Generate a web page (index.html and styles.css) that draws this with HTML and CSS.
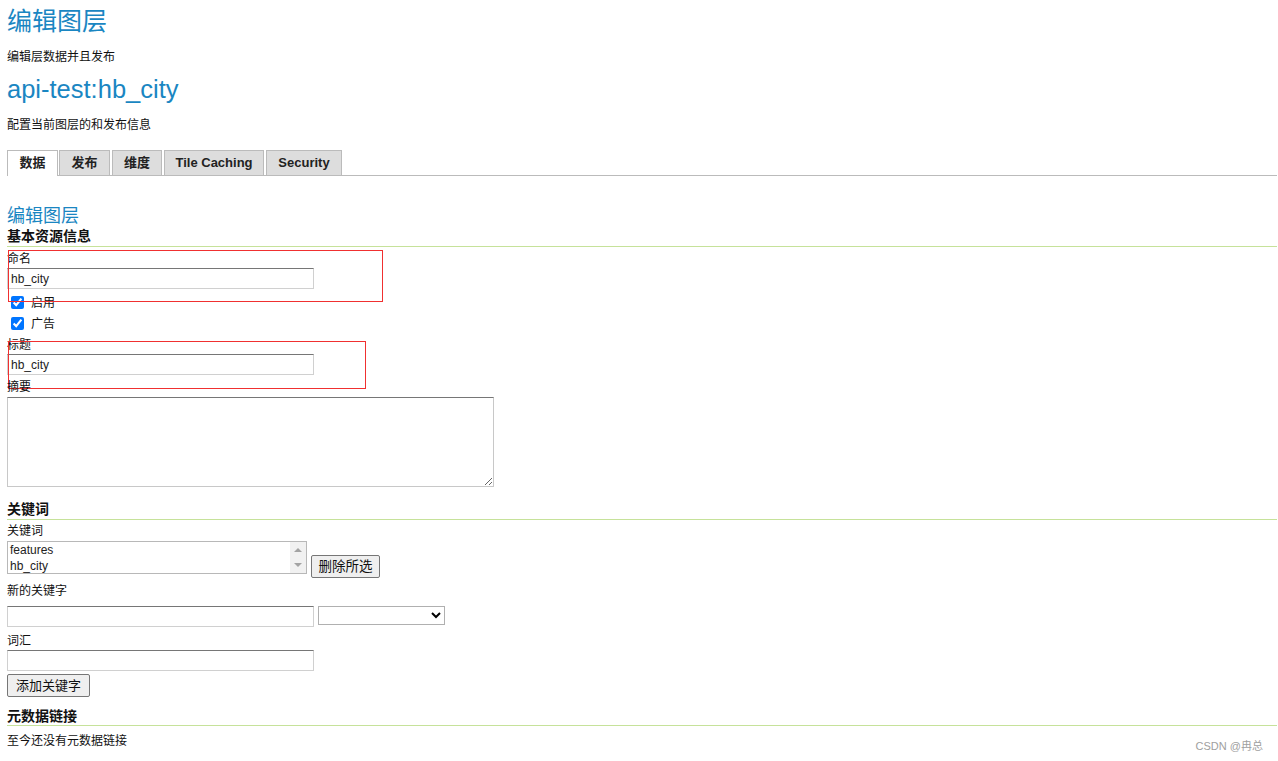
FILE: index.html
```html
<!DOCTYPE html>
<html lang="zh">
<head>
<meta charset="utf-8">
<title>编辑图层</title>
<link rel="stylesheet" href="styles.css">
</head>
<body>
<div class="page">
  <h1 class="title">编辑图层</h1>
  <p class="desc d1">编辑层数据并且发布</p>
  <h1 class="title t2">api-test:hb_city</h1>
  <p class="desc d2">配置当前图层的和发布信息</p>

  <ul class="tabs">
    <li class="tab active">数据</li>
    <li class="tab">发布</li>
    <li class="tab">维度</li>
    <li class="tab">Tile Caching</li>
    <li class="tab">Security</li>
  </ul>

  <h2 class="sub">编辑图层</h2>
  <h3 class="section s1">基本资源信息</h3>

  <div class="field f-name">
    <label class="lbl">命名</label>
    <input class="text" type="text" value="hb_city">
    <span class="mark m1"></span>
  </div>
  <div class="check c1"><input type="checkbox" checked><span>启用</span></div>
  <div class="check c2"><input type="checkbox" checked><span>广告</span></div>

  <div class="field f-title">
    <label class="lbl">标题</label>
    <input class="text" type="text" value="hb_city">
    <span class="mark m2"></span>
  </div>
  <div class="field f-abs">
    <label class="lbl">摘要</label>
    <textarea class="area"></textarea>
  </div>

  <h3 class="section s2">关键词</h3>
  <label class="lbl l-kw">关键词</label>
  <div class="kw-row">
    <div class="listbox">
      <div class="items"><div>features</div><div>hb_city</div></div>
      <div class="sbar"><span class="arr up"></span><span class="arr down"></span></div>
    </div>
    <button class="btn b-del">删除所选</button>
  </div>
  <label class="lbl l-new">新的关键字</label>
  <div class="new-row">
    <input class="text" type="text">
    <select class="sel"><option></option></select>
  </div>
  <label class="lbl l-voc">词汇</label>
  <input class="text voc" type="text">
  <button class="btn b-add">添加关键字</button>

  <h3 class="section s3">元数据链接</h3>
  <p class="desc d3">至今还没有元数据链接</p>
</div>
<div class="watermark">CSDN @冉总</div>
</body>
</html>
```
FILE: styles.css
```css
html, body { margin: 0; padding: 0; background: #fff; }
body {
  font-family: "Liberation Sans", "Noto Sans CJK SC", sans-serif;
  color: #222;
  font-size: 12px;
  width: 1278px;
  height: 761px;
  overflow: hidden;
  position: relative;
}
.page { padding: 0 1px 0 7px; display: flex; flex-direction: column; align-items: flex-start; }
.page > * { flex: none; }

.title {
  margin: 6px 0 0;
  font-size: 25px;
  line-height: 30px;
  font-weight: normal;
  color: #1a86c2;
}
.t2 { margin-top: 11px; font-size: 25.5px; }
.desc { margin: 13px 0 0; font-size: 12px; line-height: 16px; color: #111; }
.d1 { margin-bottom: -2px; }

.tabs {
  list-style: none;
  margin: 17px 0 0;
  padding: 0;
  display: flex;
  align-self: stretch;
  border-bottom: 1px solid #bbb;
  height: 25px;
}
.tab {
  box-sizing: border-box;
  height: 25px;
  border: 1px solid #bbb;
  border-bottom: none;
  background: #ddd;
  font-weight: bold;
  font-size: 13px;
  line-height: 24px;
  padding: 0;
  text-align: center;
  color: #222;
}
.tab:nth-child(1) { width: 51px; }
.tab:nth-child(2) { width: 51px; margin-left: 1px; }
.tab:nth-child(3) { width: 50px; margin-left: 2px; }
.tab:nth-child(4) { width: 100px; margin-left: 2px; }
.tab:nth-child(5) { width: 76px; margin-left: 2px; }
.tab.active { background: #fff; height: 26px; }

.sub {
  margin: 28px 0 0;
  font-size: 18px;
  line-height: 24px;
  font-weight: normal;
  color: #1a86c2;
}
.section {
  margin: 0;
  font-size: 14px;
  line-height: 16px;
  font-weight: bold;
  color: #111;
  align-self: stretch;
  padding-bottom: 2px;
  border-bottom: 1px solid #c6e29a;
}
.s2 { margin-top: 14px; padding-bottom: 2px; }
.s3 { margin-top: 11px; padding-bottom: 1px; }

.lbl { display: block; font-size: 12px; line-height: 16px; color: #111; }
.field { position: relative; display: flex; flex-direction: column; align-items: flex-start; }
.f-name { margin-top: 4px; }
.f-name .lbl, .f-title .lbl { margin-bottom: 1px; }
.f-title { margin-top: 3px; }
.f-abs { margin-top: 4px; }
.f-abs .lbl { margin-bottom: 2px; }

.text {
  box-sizing: border-box;
  width: 307px;
  height: 21px;
  margin: 0;
  padding: 1px 3px;
  font-family: "Liberation Sans", sans-serif;
  font-size: 12px;
  color: #222;
  border: 1px solid;
  border-color: #767676 #d0d0d0 #d0d0d0 #d0d0d0;
  border-radius: 0;
  outline: none;
}
.area {
  box-sizing: border-box;
  width: 487px;
  height: 90px;
  margin: 0;
  border: 1px solid;
  border-color: #767676 #c8c8c8 #c8c8c8 #c8c8c8;
  border-radius: 0;
  resize: both;
}

.mark { position: absolute; border: 1px solid #f03030; pointer-events: none; }
.m1 { left: 1px; top: -1px; width: 373px; height: 50px; }
.m2 { left: 1px; top: 4px; width: 356px; height: 46px; }

.check { display: flex; align-items: center; height: 21px; }
.c1 { margin-top: 3px; }
.check input {
  margin: 0 0 0 4px;
  width: 13px;
  height: 13px;
  accent-color: #0075ff;
}
.check span { margin-left: 7px; font-size: 12px; line-height: 16px; color: #111; }

.l-kw { margin-top: 3px; }
.kw-row { display: flex; align-items: flex-end; gap: 4px; margin-top: 2px; }
.listbox {
  box-sizing: border-box;
  width: 300px;
  height: 33px;
  border: 1px solid #b8b8b8;
  display: flex;
}
.items { flex: 1; padding: 0 2px; font-size: 12px; line-height: 16px; color: #222; }
.sbar {
  width: 16px;
  background: #f1f1f1;
  display: flex;
  flex-direction: column;
  justify-content: space-between;
  align-items: center;
  padding: 6px 0;
  box-sizing: border-box;
}
.arr { width: 0; height: 0; border-left: 4px solid transparent; border-right: 4px solid transparent; }
.arr.up { border-bottom: 4px solid #a3a3a3; }
.arr.down { border-top: 4px solid #a3a3a3; }
.btn {
  box-sizing: border-box;
  font-family: "Liberation Sans", "Noto Sans CJK SC", sans-serif;
  font-size: 13px;
  line-height: 15px;
  color: #111;
  background: #efefef;
  border: 1px solid #767676;
  border-radius: 2px;
  padding: 0;
  margin: 0;
}
.b-del { width: 69px; height: 23px; margin-bottom: -4px; font-size: 13.5px; }
.l-new { margin-top: 9px; }
.new-row { display: flex; gap: 4px; margin-top: 7px; align-items: flex-start; }
.sel {
  box-sizing: border-box;
  width: 127px;
  height: 19px;
  margin: 0;
  border: 1px solid #b0b0b0;
  border-radius: 0;
  background: #fff;
  font-size: 12px;
}
.l-voc { margin-top: 6px; }
.voc { margin-top: 1px; }
.b-add { margin-top: 3px; width: 83px; height: 23px; }
.d3 { margin-top: 7px; }

.watermark {
  position: absolute;
  right: 15px;
  top: 738px;
  font-size: 11px;
  line-height: 16px;
  color: #a0a0a0;
}
```
